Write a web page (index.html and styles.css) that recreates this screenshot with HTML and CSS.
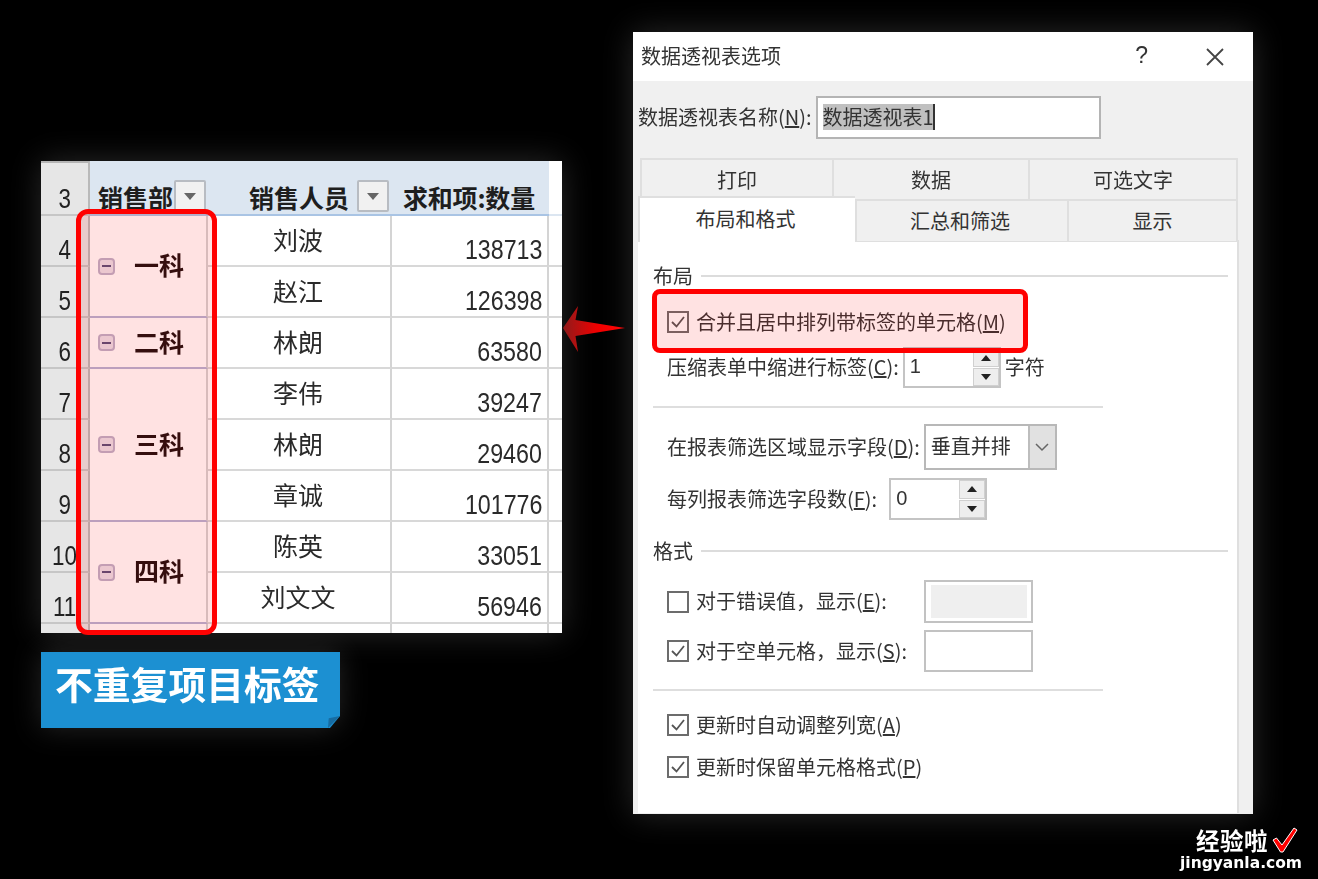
FILE: index.html
```html
<!DOCTYPE html>
<html lang="zh-CN">
<head>
<meta charset="utf-8">
<title>数据透视表选项</title>
<link rel="stylesheet" href="styles.css">
</head>
<body>
<main class="stage">
  <section class="sheet-win">
    <div class="sheet">
      <div class="rn"><span>3</span></div>
      <div class="hd a"><span class="ht">销售部</span><span class="fb"></span></div>
      <div class="hd b"><span class="ht">销售人员</span><span class="fb"></span></div>
      <div class="hd c"><span class="ht">求和项:数量</span></div>
      <div class="d h"></div>

      <div class="rn"><span>4</span></div><div class="grp s2"><span class="mi"></span><span class="gn">一科</span></div><div class="nm">刘波</div><div class="num"><span>138713</span></div><div class="d"></div>
      <div class="rn"><span>5</span></div><div class="nm">赵江</div><div class="num"><span>126398</span></div><div class="d"></div>
      <div class="rn"><span>6</span></div><div class="grp"><span class="mi"></span><span class="gn">二科</span></div><div class="nm">林朗</div><div class="num"><span>63580</span></div><div class="d"></div>
      <div class="rn"><span>7</span></div><div class="grp s3"><span class="mi"></span><span class="gn">三科</span></div><div class="nm">李伟</div><div class="num"><span>39247</span></div><div class="d"></div>
      <div class="rn"><span>8</span></div><div class="nm">林朗</div><div class="num"><span>29460</span></div><div class="d"></div>
      <div class="rn"><span>9</span></div><div class="nm">章诚</div><div class="num"><span>101776</span></div><div class="d"></div>
      <div class="rn"><span>10</span></div><div class="grp s2"><span class="mi"></span><span class="gn">四科</span></div><div class="nm">陈英</div><div class="num"><span>33051</span></div><div class="d"></div>
      <div class="rn"><span>11</span></div><div class="nm">刘文文</div><div class="num"><span>56946</span></div><div class="d"></div>
      <div class="rn end"></div><div class="grp end"></div><div class="nm end"></div><div class="num end"></div><div class="d end"></div>
    </div>
  </section>
  <div class="mark-sheet"></div>

  <div class="tag-wrap"><div class="tag"><span class="tag-t">不重复项目标签</span><span class="fold"></span></div></div>

  <svg class="arrow" width="64" height="48" viewBox="0 0 64 48">
    <defs><linearGradient id="ag" x1="0" x2="1" y1="0" y2="0"><stop offset="0" stop-color="#8e1b1b"/><stop offset=".55" stop-color="#f00000"/><stop offset="1" stop-color="#ff0000"/></linearGradient></defs>
    <polygon points="1,23 16,1 13.500,15 63,23 13.500,31 16,47" fill="url(#ag)"/>
  </svg>

  <section class="dialog">
    <header class="title"><span class="title-t">数据透视表选项</span><span class="help">?</span>
      <svg class="close" width="20" height="20" viewBox="0 0 20 20"><path d="M2 2 18 18M18 2 2 18" stroke="#444" stroke-width="1.800" fill="none"/></svg>
    </header>
    <div class="dbody">
      <div class="namerow"><span class="namelb">数据透视表名称(<u>N</u>):</span><div class="nameinp"><span class="sel">数据透视表1</span><span class="caret"></span></div></div>
      <div class="tabs t1"><div class="tab w1">打印</div><div class="tab w2">数据</div><div class="tab w3">可选文字</div></div>
      <div class="tabs t2"><div class="tab active">布局和格式</div><div class="tab w4">汇总和筛选</div><div class="tab w5">显示</div></div>
      <div class="panel">
        <div class="legend"><span>布局</span><i></i></div>
        <div class="row r-merge"><span class="cb on"><svg width="18" height="18" viewBox="0 0 18 18"><path d="M3 9 7.500 13.500 15 4" fill="none" stroke="#555" stroke-width="1.800"/></svg></span><span class="lb">合并且居中排列带标签的单元格(<u>M</u>)</span></div>
        <div class="row r-spin1"><span class="lb">压缩表单中缩进行标签(<u>C</u>):</span>
          <div class="spin s-a"><span class="val">1</span><div class="btns"><span class="up"></span><span class="dn"></span></div></div><span class="lb after">字符</span></div>
        <div class="div d1"></div>
        <div class="row r-sel"><span class="lb">在报表筛选区域显示字段(<u>D</u>):</span>
          <div class="select"><span class="val">垂直并排</span><span class="drop"><svg width="16" height="10" viewBox="0 0 16 10"><path d="M2 2 8 8 14 2" fill="none" stroke="#666" stroke-width="1.500"/></svg></span></div></div>
        <div class="row r-spin2"><span class="lb">每列报表筛选字段数(<u>F</u>):</span>
          <div class="spin s-b"><span class="val">0</span><div class="btns"><span class="up"></span><span class="dn"></span></div></div></div>
        <div class="legend l2"><span>格式</span><i></i></div>
        <div class="row r-err"><span class="cb"></span><span class="lb wide">对于错误值，显示(<u>E</u>):</span><div class="box dis"><i></i></div></div>
        <div class="row r-emp"><span class="cb on"><svg width="18" height="18" viewBox="0 0 18 18"><path d="M3 9 7.500 13.500 15 4" fill="none" stroke="#555" stroke-width="1.800"/></svg></span><span class="lb wide">对于空单元格，显示(<u>S</u>):</span><div class="box"></div></div>
        <div class="div d2"></div>
        <div class="row r-c1"><span class="cb on"><svg width="18" height="18" viewBox="0 0 18 18"><path d="M3 9 7.500 13.500 15 4" fill="none" stroke="#555" stroke-width="1.800"/></svg></span><span class="lb">更新时自动调整列宽(<u>A</u>)</span></div>
        <div class="row r-c2"><span class="cb on"><svg width="18" height="18" viewBox="0 0 18 18"><path d="M3 9 7.500 13.500 15 4" fill="none" stroke="#555" stroke-width="1.800"/></svg></span><span class="lb">更新时保留单元格格式(<u>P</u>)</span></div>
      </div>
    </div>
  </section>
  <div class="mark-dlg"></div>

  <div class="wm">
    <div class="wm-top"><span>经验啦</span>
      <svg width="26" height="26" viewBox="0 0 26 26"><polygon points="1,13 4.500,11 10,18 22,1 25,3 11,25 8.500,25" fill="#f00" stroke="#fff" stroke-width="1"/></svg>
    </div>
    <div class="wm-bot">jingyanla.com</div>
  </div>
</main>
</body>
</html>
```

FILE: styles.css
```css
* { box-sizing: border-box; }
html, body { margin: 0; padding: 0; background: #000; }
body { width: 1318px; height: 879px; overflow: hidden; font-family: "Noto Sans CJK SC", "Liberation Sans", sans-serif; }
.stage { position: relative; width: 1318px; height: 879px; background: #000; overflow: hidden; }

/* spreadsheet window */
.sheet-win { position: absolute; left: 41px; top: 161px; width: 521px; height: 472px; background: #fff; box-shadow: 0 0 30px rgba(255,255,255,.16); }
.sheet { display: grid; grid-template-columns: 49px 118px 184px 157px 13px; grid-template-rows: 55px repeat(8, 51px) 9px; height: 472px; filter: blur(.55px); color: #222; font-size: 25px; }
.rn { background: #e6e6e6; border-right: 2px solid #b9b9b9; border-bottom: 2px solid #c6c6c6; display: flex; justify-content: center; align-items: flex-end; font-family: "Liberation Sans", sans-serif; font-size: 28px; line-height: 30px; overflow: hidden; }
.rn span { display: inline-block; transform: scaleX(.8); white-space: nowrap; }
.rn:first-child { border-top: 2px solid #b4b4b4; }
.rn.end { border-bottom: 0; }
.hd { background: #dce6f1; border-bottom: 2px solid #a9c4e4; position: relative; font-weight: 700; display: flex; align-items: flex-end; }
.ht { line-height: 36px; margin-bottom: -1px; white-space: nowrap; color: #1e1e1e; }
.hd.a { padding-left: 8px; }
.hd.b { padding-left: 41px; }
.hd.c { padding-left: 11px; letter-spacing: -.2px; }
.fb { position: absolute; top: 19px; width: 32px; height: 32px; background: #f1f1f1; border: 2px solid #b8bcc2; border-radius: 2px; display: flex; align-items: center; justify-content: center; }
.fb::after { content: ""; width: 0; height: 0; border-left: 6px solid transparent; border-right: 6px solid transparent; border-top: 7px solid #666; }
.hd.a .fb { left: 84px; }
.hd.b .fb { left: 149px; }
.d { background: #fff; border-left: 2px solid #d4d4d4; border-bottom: 2px solid #d8d8d8; margin-left: -2px; }
.d.h { border-bottom-color: #dce6f1; border-left: 0; margin-left: 0; }
.d.end, .nm.end, .num.end { border-bottom: 0; }
.grp { grid-row: span 1; background: #fff; border-bottom: 2px solid #b4b4d6; border-right: 2px solid #d4d4d4; display: flex; align-items: center; padding-left: 8px; }
.grp.s2 { grid-row: span 2; }
.grp.s3 { grid-row: span 3; }
.grp.end { border-bottom: 0; }
.mi { width: 17px; height: 17px; border: 2px solid #bcb2ca; border-radius: 4px; background: #e9e1ea; display: flex; align-items: center; justify-content: center; flex: none; }
.mi::after { content: ""; width: 9px; height: 2px; background: #57507a; }
.gn { font-weight: 700; margin-left: 19px; line-height: 36px; color: #1c1010; margin-top: -4px; }
.nm { border-right: 2px solid #d4d4d4; border-bottom: 2px solid #d8d8d8; display: flex; align-items: center; justify-content: center; padding: 0 2px 3px 0; line-height: 36px; color: #2a2a2a; }
.num { border-right: 2px solid #d4d4d4; border-bottom: 2px solid #d8d8d8; display: flex; justify-content: flex-end; align-items: flex-end; padding-right: 5px; font-family: "Liberation Sans", sans-serif; font-size: 28px; line-height: 31px; color: #2a2a2a; }
.num span { display: inline-block; transform: scaleX(.83); transform-origin: right center; }

/* red markers (over content) */
.mark-sheet { position: absolute; left: 76px; top: 209px; width: 141px; height: 426px; border: 5px solid #f00; border-radius: 12px; background: rgba(255,0,0,.115); }
.mark-dlg { position: absolute; left: 652px; top: 289px; width: 376px; height: 64px; border: 5px solid #f00; border-radius: 8px; background: rgba(255,0,0,.115); }

/* tag */
.tag-wrap { position: absolute; left: 41px; top: 652px; width: 299px; height: 76px; filter: drop-shadow(0 0 14px rgba(255,255,255,.14)); }
.tag { position: relative; width: 299px; height: 76px; background: #1c90d2; clip-path: polygon(0 0, 100% 0, 100% 64px, 289px 100%, 0 100%); }
.tag-t { display: block; padding: 6px 0 0 14px; font-size: 37.800px; line-height: 50px; font-weight: 700; color: #fff; white-space: nowrap; filter: blur(.3px); }
.fold { position: absolute; right: 0; bottom: 0; width: 12px; height: 12px; background: #176ca2; clip-path: polygon(100% 0, 0 100%, 6% 18%); }

.arrow { position: absolute; left: 562px; top: 305px; }

/* dialog */
.dialog { position: absolute; left: 633px; top: 32px; width: 620px; height: 782px; background: #f0f0f0; box-shadow: 0 0 30px rgba(255,255,255,.16); color: #333; font-size: 20px; overflow: hidden; }
.title { height: 49px; background: #fff; display: flex; align-items: center; padding: 0 0 2px 8px; position: relative; line-height: 28px; filter: blur(.5px); }
.title-t { flex: 1; }
.help { font-family: "Liberation Sans", sans-serif; font-size: 23px; margin-right: 57px; color: #333; margin-top: -2px; }
.close { margin-right: 28px; margin-top: 2px; }
.dbody { height: 733px; padding-top: 15px; filter: blur(.5px); }
.namerow { display: flex; align-items: center; height: 43px; padding-left: 5px; white-space: nowrap; }
.namelb { padding-bottom: 3px; }
.nameinp { margin-left: 4px; width: 285px; height: 43px; background: #fff; border: 2px solid #b4b4b4; display: flex; align-items: center; padding: 0 0 2px 5px; }
.sel { background: #c0c0c0; height: 26px; line-height: 25px; width: 110px; white-space: nowrap; }
.caret { width: 2px; height: 26px; background: #333; }
.tabs { display: flex; }
.t1 { margin: 19px 0 0 7px; height: 41px; }
.t2 { margin: 0 0 0 5px; height: 42px; position: relative; }
.tab { display: flex; align-items: center; justify-content: center; height: 100%; border: 2px solid #dfdfdf; border-right: 0; border-bottom: 0; line-height: 28px; background: #f0f0f0; }
.w1 { width: 192px; }
.w2 { width: 196px; }
.w3 { width: 210px; border-right: 2px solid #dfdfdf; }
.active { width: 217px; background: #fff; margin-top: -3px; height: 46px; padding: 0 4px 3px 0; border-bottom: 0; position: relative; z-index: 1; }
.w4 { width: 212px; padding-right: 4px; }
.w5 { width: 171px; border-right: 2px solid #dfdfdf; }
.panel { margin-left: 5px; width: 601px; height: 573px; background: #fff; border-right: 2px solid #dfdfdf; border-top: 2px solid #dfdfdf; margin-top: -1px; padding-left: 15px; }
.legend { display: flex; align-items: center; height: 20px; line-height: 20px; width: 575px; margin-top: 24px; }
.legend i { flex: 1; height: 2px; background: #dcdcdc; margin-left: 8px; }
.legend.l2 { margin-top: 21px; }
.row { display: flex; align-items: center; padding-left: 14px; white-space: nowrap; line-height: 28px; }
.cb { width: 22px; height: 22px; flex: none; border: 2px solid #6c6c6c; margin-right: 7px; background: #fff; display: flex; align-items: center; justify-content: center; }
.lb { display: block; margin-top: -1px; }
.wide { width: 228px; }
.r-merge { margin-top: 25px; height: 22px; }
.r-spin1 { margin-top: 14px; height: 41px; }
.d1 { margin-top: 18px; }
.div { width: 450px; height: 2px; background: #dedede; }
.r-sel { margin-top: 16px; height: 46px; }
.r-spin2 { margin-top: 8px; height: 42px; }
.r-err { margin-top: 19px; height: 43px; }
.r-emp { margin-top: 7px; height: 42px; }
.d2 { margin-top: 17px; }
.r-c1 { margin-top: 23px; height: 22px; }
.r-c2 { margin-top: 20px; height: 22px; }
.spin { height: 100%; width: 98px; border: 2px solid #c4c4c4; background: #fff; display: flex; align-items: stretch; justify-content: space-between; padding-left: 5px; }
.s-a { margin-left: 4px; }
.s-b { margin-left: 12px; }
.after { margin-left: 4px; }
.val { align-self: center; font-family: "Liberation Sans", "Noto Sans CJK SC", sans-serif; font-size: 20px; line-height: 26px; margin-top: -3px; }
.btns { width: 26px; display: flex; flex-direction: column; gap: 1px; }
.btns span { flex: 1; background: #eee; border: 1px solid #d0d0d0; display: flex; align-items: center; justify-content: center; }
.up::after { content: ""; border-left: 5px solid transparent; border-right: 5px solid transparent; border-bottom: 6px solid #222; }
.dn::after { content: ""; border-left: 5px solid transparent; border-right: 5px solid transparent; border-top: 6px solid #222; }
.select { margin-left: 4px; width: 133px; height: 100%; border: 2px solid #b8b8b8; background: #fff; display: flex; justify-content: space-between; padding-left: 5px; }
.select .val { font-family: "Noto Sans CJK SC", sans-serif; margin-top: -2px; }
.drop { width: 27px; background: #e1e1e1; border-left: 2px solid #bdbdbd; display: flex; align-items: center; justify-content: center; }
.box { width: 109px; height: 100%; border: 2px solid #c2c2c2; background: #fff; display: flex; align-items: center; justify-content: center; }
.box.dis i { width: 96px; height: 33px; background: #efefef; }

/* watermark */
.wm { position: absolute; left: 1180px; top: 826px; width: 125px; color: #fff; font-weight: 700; filter: blur(.3px); }
.wm-top { display: flex; align-items: center; justify-content: flex-end; font-size: 23.500px; line-height: 28px; gap: 4px; padding-right: 7px; letter-spacing: .5px; height: 28px; }
.wm-bot { font-family: "DejaVu Sans", sans-serif; font-size: 15.500px; line-height: 18px; letter-spacing: 0; white-space: nowrap; }
```
